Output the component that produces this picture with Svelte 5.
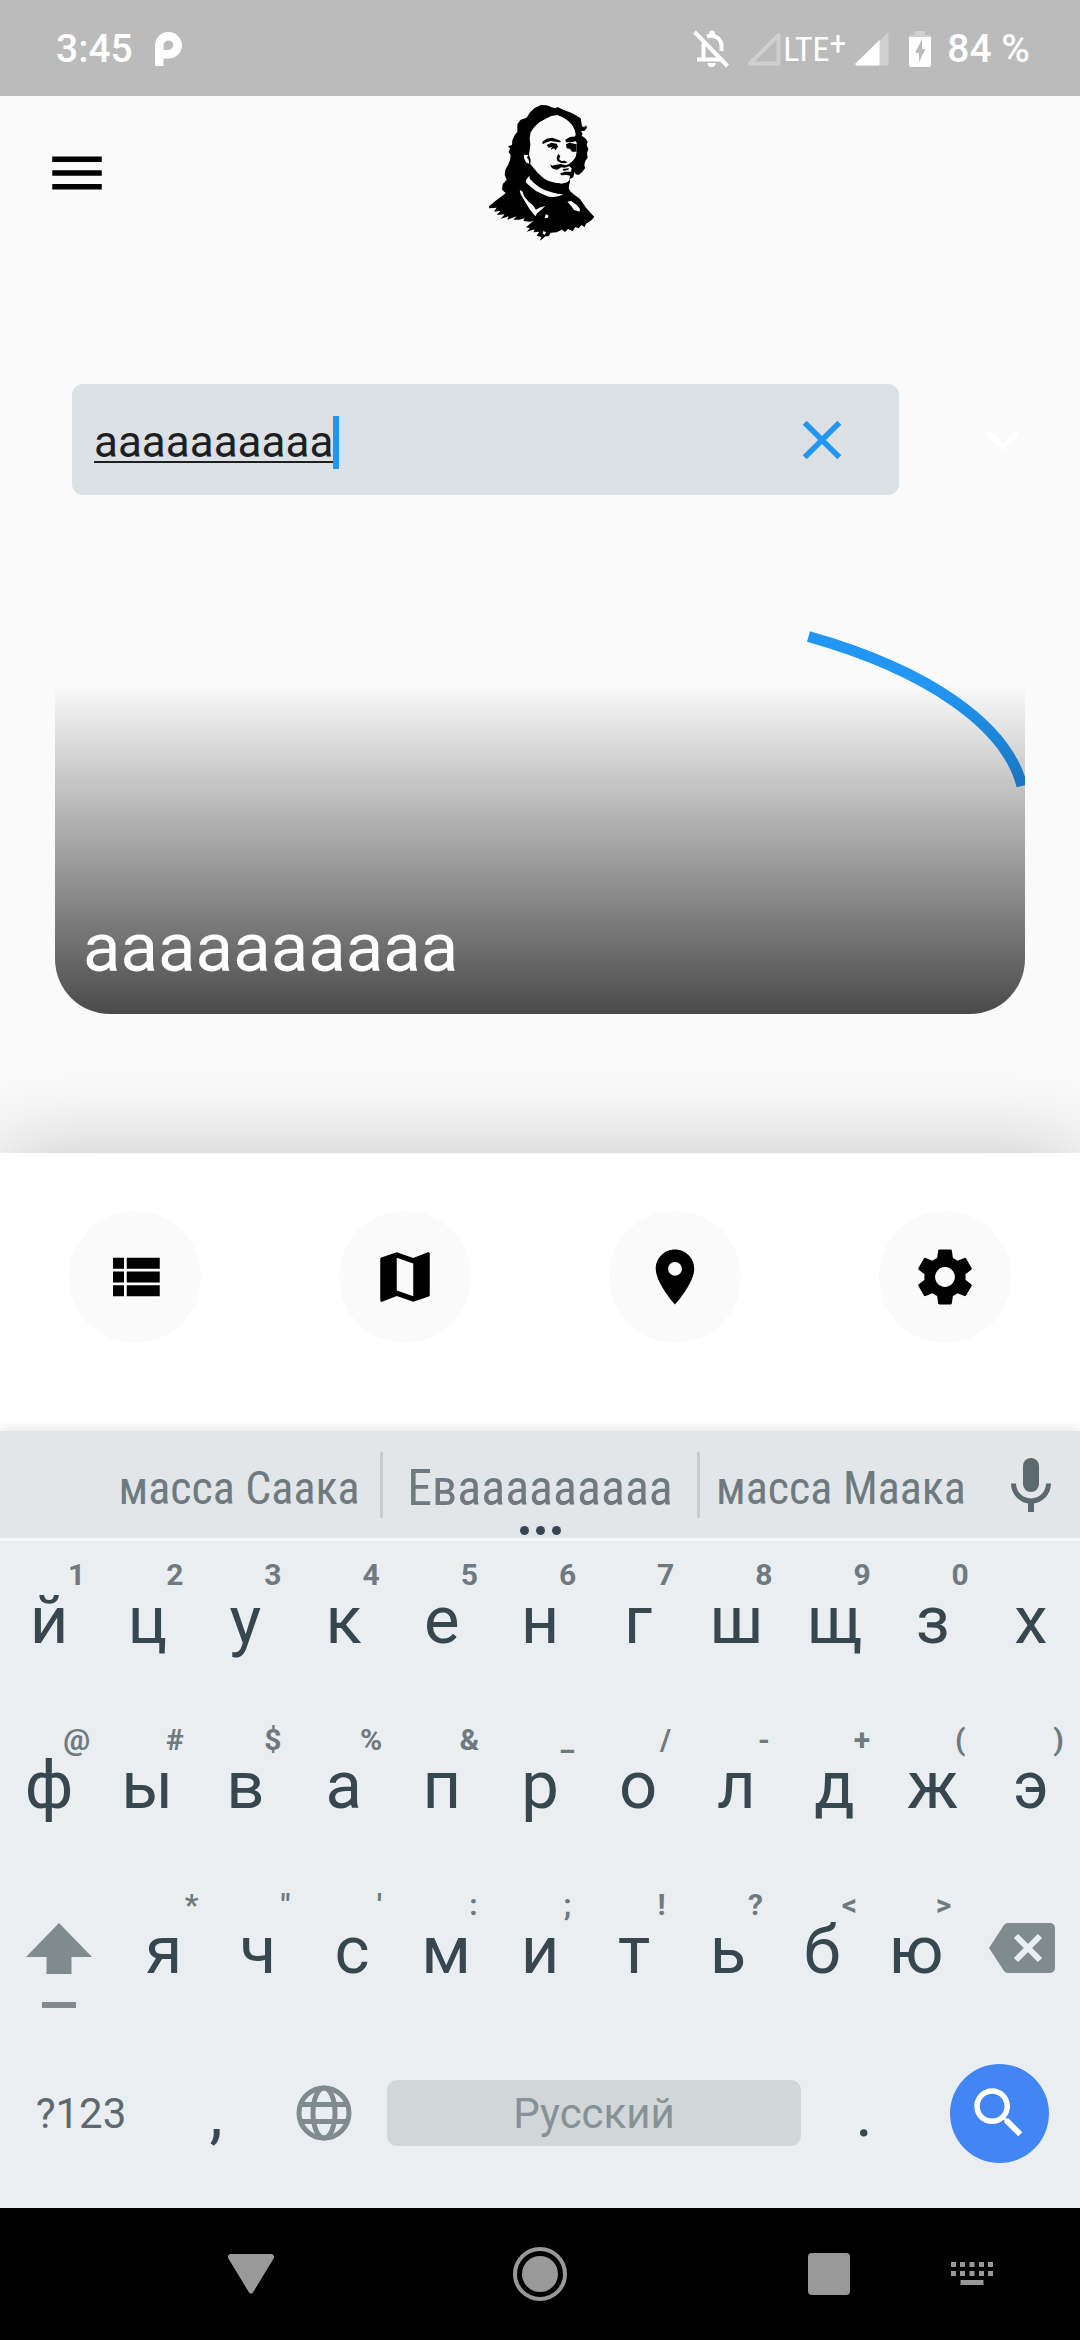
<script lang="ts">
  let query = $state('аааааааааа');

  const tabs = [
    { label: 'Список', d: 'M4 14h4v-4H4v4zm0 5h4v-4H4v4zM4 9h4V5H4v4zm5 5h12v-4H9v4zm0 5h12v-4H9v4zM9 5v4h12V5H9z' },
    { label: 'Карта', d: 'M20.5 3l-.16.03L15 5.1 9 3 3.36 4.9c-.21.07-.36.25-.36.48V20.5c0 .28.22.5.5.5l.16-.03L9 18.9l6 2.1 5.64-1.9c.21-.07.36-.25.36-.48V3.5c0-.28-.22-.5-.5-.5zM15 19l-6-2.11V5l6 2.11V19z' },
    { label: 'Место', d: 'M12 2C8.13 2 5 5.13 5 9c0 5.25 7 13 7 13s7-7.75 7-13c0-3.87-3.13-7-7-7zm0 9.5c-1.38 0-2.5-1.12-2.5-2.5s1.12-2.5 2.5-2.5 2.5 1.12 2.5 2.5-1.12 2.5-2.5 2.5z' },
    { label: 'Настройки', d: 'M19.43 12.98c.04-.32.07-.64.07-.98s-.03-.66-.07-.98l2.11-1.65c.19-.15.24-.42.12-.64l-2-3.46c-.12-.22-.39-.3-.61-.22l-2.49 1c-.52-.4-1.08-.73-1.69-.98l-.38-2.65C14.46 2.18 14.25 2 14 2h-4c-.25 0-.46.18-.49.42l-.38 2.65c-.61.25-1.17.59-1.69.98l-2.49-1c-.23-.09-.49 0-.61.22l-2 3.46c-.13.22-.07.49.12.64l2.11 1.65c-.04.32-.07.65-.07.98s.03.66.07.98l-2.11 1.65c-.19.15-.24.42-.12.64l2 3.46c.12.22.39.3.61.22l2.49-1c.52.4 1.08.73 1.69.98l.38 2.65c.03.24.24.42.49.42h4c.25 0 .46-.18.49-.42l.38-2.65c.61-.25 1.17-.59 1.69-.98l2.49 1c.23.09.49 0 .61-.22l2-3.46c.12-.22.07-.49-.12-.64l-2.11-1.65zM12 15.6c-1.99 0-3.6-1.61-3.6-3.6s1.61-3.6 3.6-3.6 3.6 1.61 3.6 3.6-1.61 3.6-3.6 3.6z' }
  ];

  const suggestions = ['масса Саака', 'Еваааааааааа'.slice(0, 11), 'масса Маака'];

  const pair = (letters: string, hints: string) =>
    [...letters].map((letter, i) => ({ letter, hint: hints[i] ?? '' }));

  const topRow = pair('йцукенгшщзх', '1234567890');
  const homeRow = pair('фывапролджэ', '@#$%&_/-+()');
  const lowRow = pair('ячсмитьбю', '*"\':;!?<>');
</script>

{#snippet key(k: { letter: string; hint: string })}
  <button class="key">
    <span class="hint">{k.hint}</span>
    <span class="letter">{k.letter}</span>
  </button>
{/snippet}

<div class="screen">
  <div class="status">
    <span class="clock">3:45</span>
    <svg class="parking" viewBox="0 0 27 34" width="27" height="34" aria-hidden="true">
      <path fill="#fff" fill-rule="evenodd" d="M0 13.500A13.500 13.200 0 1 1 13.500 26.500H8.500V34H0ZM13.500 8.500a5 5 0 0 0-5 5v4.500h5a4.700 4.700 0 0 0 0-9.500Z" />
    </svg>
    <div class="status-right">
      <svg class="bell" viewBox="0 0 36 38" width="36" height="38" fill="none" stroke="#fff" stroke-width="4" aria-hidden="true">
        <path d="M10.500 13.500V28.500M4 29.500H28M14 6.500C22 4 28.500 9 28.500 16V21" />
        <path d="M1.500 2 34.500 36" />
        <path fill="#fff" stroke="none" d="M16 6V3.500a3 3 0 0 1 6 0V6ZM14.500 33h8a4 4 0 0 1-8 0Z" />
      </svg>
      <svg viewBox="0 0 34 34" width="34" height="34" aria-hidden="true">
        <path d="M31.500 3V31.500H3Z" fill="none" stroke="#cfcfcf" stroke-width="4" stroke-linejoin="round" />
      </svg>
      <span class="lte">LTE<sup>+</sup></span>
      <svg viewBox="0 0 34 34" width="34" height="34" aria-hidden="true">
        <path d="M33 1V33H1Z" fill="#d0d0d0" stroke="#d0d0d0" stroke-width="1" stroke-linejoin="round" />
        <path d="M24.500 8V33.500H1.500L0 32Z" fill="#fff" />
      </svg>
      <svg class="battery" viewBox="0 0 22 36" width="22" height="36" aria-hidden="true">
        <path fill="#d0d0d0" d="M6 0h10v4h4a2 2 0 0 1 2 2H0a2 2 0 0 1 2-2h4Z" />
        <path fill="#fff" fill-rule="evenodd" d="M0 6h22v28a2 2 0 0 1-2 2H2a2 2 0 0 1-2-2ZM13 8 6 22h4v9l6.500-13H13Z" />
      </svg>
      <span>84 %</span>
    </div>
  </div>

  <header class="appbar">
    <button class="menu" aria-label="Меню">
      <svg class="icon" viewBox="0 0 24 24"><path d="M3 18h18v-2H3v2zm0-5h18v-2H3v2zm0-7v2h18V6H3z" /></svg>
    </button>
    <svg class="portrait" viewBox="15 21 330 426" width="110" height="142" role="img" aria-label="Портрет">
      <path d="M183 30 200 31 215 37 226 40 232 36 250 44 275 54 290 62 302 70 304 82 306 94 312 97 318 91 321 98 314 107 303 109 308 116 305 122 316 130 323 140 320 150 325 162 321 175 323 188 316 198 313 208 315 220 306 232 296 240 287 238 284 230 280 246 270 252 268 264 266 280 272 290 284 300 300 312 318 338 343 366 334 376 318 386 314 396 304 390 296 400 286 396 278 409 264 402 255 411 246 404 230 412 212 413 206 424 196 424 188 431 180 437 184 426 170 422 178 410 160 412 164 403 140 410 150 399 138 397 160 378 150 380 130 378 134 370 118 374 100 374 110 364 82 374 86 364 62 372 74 358 50 360 62 347 42 350 50 338 27 340 28 333 46 318 70 300 77 294 66 284 68 268 80 254 74 240 76 224 84 210 90 196 92 180 86 172 90 160 84 154 96 150 97 136 103 122 112 110 112 88 122 74 140 68 150 52 165 38Z" />
      <g fill="#fafafa">
        <path d="M232 60 248 67 264 77 276 89 284 104 287 118 284 132 290 144 291 165 287 186 284 200 276 208 275 222 270 240 268 256 262 263 246 268 232 264 214 264 198 256 184 244 170 230 158 216 151 208 152 194 147 180 149 165 151 148 149 130 152 112 163 96 178 82 200 70 214 63Z" />
        <path d="M131 179 145 180 141 188 146 194 148 206 139 203 133 192Z" />
        <path d="M148 242 150 252 162 264 176 275 192 284 210 290 232 296 250 298 238 303 222 306 206 305 188 298 168 288 150 274 137 262 139 254Z" />
        <path d="M119 284 128 290 132 304 146 320 158 330 168 344 178 338 196 333 184 344 172 354 166 364 150 344 134 318 122 298Z" />
        <path d="M262 320 274 318 290 330 300 342 299 350 282 345 274 334Z" />
        <path d="M198 357 206 362 202 370 194 368ZM190 408 198 412 194 420 188 415Z" />
      </g>
      <path d="M187 140 200 131 216 128 230 133 243 138 240 142 226 140 212 138 200 142 188 148ZM200 150 214 143 230 146 234 155 226 166 222 160 212 164 216 156 206 158ZM256 134 270 126 290 124 290 138 272 142 258 142ZM258 148 268 143 290 148 290 170 276 170 270 162 260 160ZM235 176 241 184 237 192 244 198 254 197 262 202 256 205 244 204 232 198 230 188ZM211 206 216 212 228 209 242 207 258 211 268 206 278 198 289 184 288 206 278 222 268 214 254 218 244 217 232 224 220 222 213 216ZM248 222 268 220 264 225 250 227ZM240 236 254 230 276 230 272 242 258 240 244 241Z" />
      <path d="M152 208 162 222 174 236 188 250 206 258 226 263 244 266 262 262 271 254 268 266 264 284 256 274 242 272 228 276 214 274 200 268 182 256 166 238Z" />
      <path d="M162 258 180 272 198 283 216 290 240 293" fill="none" stroke="#000" stroke-width="2" stroke-dasharray="3 4" />
    </svg>
  </header>

  <main>
    <div class="search-row">
      <div class="field">
        <label class="entry">
          <input type="text" aria-label="Поиск" spellcheck="false" bind:value={query} />
          <span class="caret"></span>
        </label>
        <button class="clear" aria-label="Очистить" onclick={() => (query = '')}>
          <svg class="icon" viewBox="0 0 24 24"><path d="M19 6.410L17.590 5 12 10.590 6.410 5 5 6.410 10.590 12 5 17.590 6.410 19 12 13.410 17.590 19 19 17.590 13.410 12z" /></svg>
        </button>
      </div>
      <button class="expand" aria-label="Развернуть">
        <svg class="icon" viewBox="0 0 24 24"><path d="M7.410 8.590L12 13.170l4.590-4.580L18 10l-6 6-6-6z" /></svg>
      </button>
    </div>

    <article class="card">
      <svg class="spinner" viewBox="0 0 970 412" preserveAspectRatio="none" aria-hidden="true">
        <path d="M753.500 34.500A485 206 0 0 1 967 184" fill="none" stroke="#2196f3" stroke-width="11" />
      </svg>
      <h2>{query}</h2>
    </article>
  </main>

  <nav class="tabs">
    {#each tabs as tab}
      <button aria-label={tab.label}>
        <svg class="icon" viewBox="0 0 24 24"><path d={tab.d} /></svg>
      </button>
    {/each}
  </nav>

  <section class="keyboard" aria-label="Клавиатура">
    <div class="strip">
      <div class="words">
        {#each suggestions as word, i}
          <button>{word}{#if i === 1}<span class="more"><i></i><i></i><i></i></span>{/if}</button>
        {/each}
      </div>
      <button class="mic" aria-label="Голосовой ввод">
        <svg viewBox="0 0 40 54" width="40" height="54">
          <rect x="12" width="16" height="34" rx="8" fill="#5c696f" />
          <path d="M2.500 25.500a17.500 17.500 0 0 0 35 0M20 43V54" fill="none" stroke="#5c696f" stroke-width="5" />
          <path d="M17 42h6v12h-6z" fill="#5c696f" />
        </svg>
      </button>
    </div>

    <div class="keys">
      <div class="row">
        {#each topRow as k}{@render key(k)}{/each}
      </div>
      <div class="row">
        {#each homeRow as k}{@render key(k)}{/each}
      </div>
      <div class="row low">
        <button class="side" aria-label="Shift">
          <svg viewBox="0 0 66 86" width="66" height="86" fill="#808b8f">
            <path d="M33 0 66 34H45.500V51H20.500V34H0ZM16 79h34v6H16Z" />
          </svg>
        </button>
        {#each lowRow as k}{@render key(k)}{/each}
        <button class="side" aria-label="Удалить">
          <svg viewBox="0 0 66 50" width="66" height="50">
            <path d="M19 0H61a5 5 0 0 1 5 5V45a5 5 0 0 1-5 5H19a5 5 0 0 1-4-2L0 25 15 2a5 5 0 0 1 4-2Z" fill="#808b8f" />
            <path d="M27 13 51 37M51 13 27 37" stroke="#eaeef1" stroke-width="6" />
          </svg>
        </button>
      </div>
      <div class="row last">
        <button class="mode">?123</button>
        <button class="punct">,</button>
        <button aria-label="Язык">
          <svg viewBox="0 0 56 56" width="56" height="56" fill="none" stroke="#808b8f" stroke-width="5">
            <circle cx="28" cy="28" r="25" />
            <ellipse cx="28" cy="28" rx="11" ry="25" />
            <path d="M5 19.500H51M5 36.500H51" />
          </svg>
        </button>
        <button class="space">Русский</button>
        <button class="punct">.</button>
        <button class="enter" aria-label="Найти">
          <span>
            <svg class="icon" viewBox="0 0 24 24"><path d="M15.500 14h-.79l-.28-.27C15.410 12.590 16 11.110 16 9.500 16 5.910 13.090 3 9.500 3S3 5.910 3 9.500 5.910 16 9.500 16c1.610 0 3.090-.59 4.230-1.570l.27.28v.79l5 4.990L20.490 19l-4.990-5zm-6 0C7.010 14 5 11.990 5 9.500S7.010 5 9.500 5 14 7.010 14 9.500 11.990 14 9.500 14z" /></svg>
          </span>
        </button>
      </div>
    </div>
  </section>

  <nav class="system">
    <button aria-label="Назад">
      <svg viewBox="0 0 46 40" width="46" height="40"><path d="M3 0H43a3 3 0 0 1 2.600 4.500L25 38.500a2.300 2.300 0 0 1-4 0L.4 4.500A3 3 0 0 1 3 0Z" /></svg>
    </button>
    <button aria-label="Домой">
      <svg viewBox="0 0 54 54" width="54" height="54">
        <circle cx="27" cy="27" r="18" />
        <circle cx="27" cy="27" r="25" fill="none" stroke="#999" stroke-width="4" />
      </svg>
    </button>
    <div class="system-end">
      <button class="recents" aria-label="Недавние">
        <svg viewBox="0 0 42 42" width="42" height="42"><rect width="42" height="42" rx="4" /></svg>
      </button>
      <button class="ime" aria-label="Выбор клавиатуры">
        <svg viewBox="0 0 42 24" width="42" height="24">
          <path d="M0 0h5v5H0zM9 0h5v5H9zM18.500 0h5v5h-5zM28 0h5v5h-5zM37 0h5v5h-5zM0 9h5v5H0zM9 9h5v5H9zM18.500 9h5v5h-5zM28 9h5v5h-5zM37 9h5v5h-5zM9.500 18h23v5h-23z" />
        </svg>
      </button>
    </div>
  </nav>
</div>

<style>
  :global(body) {
    margin: 0;
    background: #fafafa;
  }
  .screen {
    display: flex;
    flex-direction: column;
    min-height: 100vh;
    font-family: Roboto, 'Liberation Sans', sans-serif;
    background: #fafafa;
    overflow: hidden;
  }
  button {
    margin: 0;
    padding: 0;
    border: 0;
    background: none;
    color: inherit;
    font: inherit;
    display: flex;
    align-items: center;
    justify-content: center;
  }
  svg {
    display: block;
    flex: none;
  }
  .icon {
    width: 66px;
    height: 66px;
    fill: currentColor;
  }

  .status {
    display: flex;
    align-items: center;
    height: 96px;
    padding: 2px 50px 0 56px;
    box-sizing: border-box;
    background: #bbb;
    color: #fff;
    font-size: 39px;
    font-weight: 500;
    line-height: 46px;
  }
  .parking {
    margin-left: 22px;
  }
  .status-right {
    display: flex;
    align-items: center;
    margin-left: auto;
  }
  .bell {
    margin-right: 18px;
  }
  .lte {
    display: flex;
    align-items: center;
    width: 74px;
    padding-left: 2px;
    box-sizing: border-box;
    font-family: 'Roboto Condensed', 'Liberation Sans Narrow', 'Open Sans', sans-serif;
    font-size: 34px;
    font-weight: 400;
  }
  .lte sup {
    font-size: 34px;
    line-height: 28px;
    padding-bottom: 12px;
  }
  .battery {
    margin: 0 16px 0 20px;
  }

  .appbar {
    display: grid;
    grid-template-columns: 1fr auto 1fr;
    align-items: center;
    height: 154px;
  }
  .menu {
    width: 154px;
    height: 154px;
  }

  main {
    flex: 1;
    display: flex;
    flex-direction: column;
    padding: 134px 0 139px;
  }
  .search-row {
    display: flex;
    align-items: center;
    padding: 0 44px 0 72px;
  }
  .field {
    flex: 1;
    display: flex;
    align-items: center;
    height: 111px;
    padding: 0 44px 0 22px;
    box-sizing: border-box;
    border-radius: 11px;
    background: #dce1e5;
  }
  .entry {
    display: flex;
    align-items: center;
    min-width: 0;
    padding-top: 5px;
  }
  input {
    field-sizing: content;
    min-width: 0;
    height: 60px;
    padding: 0;
    border: 0;
    outline: 0;
    background: none;
    color: #1f1f1f;
    font-family: inherit;
    font-size: 44px;
    text-decoration: underline;
    text-decoration-thickness: 2px;
    text-underline-offset: 4px;
  }
  .caret {
    flex: none;
    width: 6px;
    height: 53px;
    background: #2196f3;
  }
  .clear {
    margin-left: auto;
    color: #2196f3;
  }
  .expand {
    margin-left: 71px;
    color: #fff;
  }

  .card {
    position: relative;
    display: flex;
    align-items: flex-end;
    height: 412px;
    margin: 107px 55px 0;
    padding: 0 28px 25px;
    box-sizing: border-box;
    border-radius: 55px;
    overflow: hidden;
  }
  .card::after {
    content: '';
    position: absolute;
    inset: 0;
    background: linear-gradient(rgba(0, 0, 0, 0) 20%, rgba(0, 0, 0, 0.7));
  }
  .spinner {
    position: absolute;
    inset: 0;
    width: 100%;
    height: 100%;
  }
  h2 {
    position: relative;
    z-index: 1;
    margin: 0;
    color: #fff;
    font-size: 69px;
    font-weight: 400;
    line-height: 82px;
  }

  .tabs {
    display: grid;
    grid-template-columns: repeat(4, 1fr);
    justify-items: center;
    padding: 58px 0 88px;
    background: #fff;
    box-shadow: 0 0 82px rgba(0, 0, 0, 0.22);
  }
  .tabs button {
    width: 132px;
    height: 132px;
    border-radius: 50%;
    background: #fafafa;
    color: #000;
  }

  .keyboard {
    position: relative;
    background: #eaeef1;
    box-shadow: 0 0 12px rgba(0, 0, 0, 0.15);
  }
  .strip {
    display: flex;
    height: 107px;
    padding-left: 98px;
    background: #e2e6e9;
    border-bottom: 3px solid #f4f6f8;
  }
  .words {
    flex: 1;
    display: grid;
    grid-template-columns: 1fr 320px 1fr;
    padding: 21px 0 20px;
  }
  .words button {
    position: relative;
    padding-top: 5px;
    color: #6e7a7f;
    font-family: 'Roboto Condensed', Roboto, sans-serif;
    font-size: 46px;
    line-height: 58px;
    white-space: nowrap;
  }
  .words button:nth-child(2) {
    border: solid #c8cdd0;
    border-width: 0 3px;
    font-size: 50px;
  }
  .more {
    position: absolute;
    top: 74px;
    left: 0;
    right: 0;
    display: flex;
    justify-content: center;
    gap: 7px;
  }
  .more i {
    width: 9px;
    height: 9px;
    border-radius: 50%;
    background: #37474f;
  }
  .mic {
    width: 98px;
  }

  .keys {
    padding: 2px 0 20px;
    color: #37474f;
  }
  .row {
    display: grid;
    grid-template-columns: repeat(11, 1fr);
    height: 165px;
  }
  .row.low {
    grid-template-columns: 117px repeat(9, 1fr) 117px;
  }
  .row.last {
    grid-template-columns: 3fr 2fr 2fr 8fr 2fr 3fr;
    align-items: center;
    height: 150px;
  }
  .key {
    flex-direction: column;
    align-items: stretch;
    justify-content: flex-start;
    min-width: 0;
    padding-top: 14px;
  }
  .hint {
    height: 36px;
    padding-left: 55px;
    color: #6e7a7f;
    font-size: 30px;
    font-weight: 700;
    line-height: 36px;
  }
  .letter {
    font-size: 67px;
    line-height: 54px;
  }
  .side {
    align-items: flex-start;
    padding-top: 50px;
  }
  .mode {
    color: #5c696f;
    font-size: 42px;
  }
  .punct {
    font-size: 67px;
    line-height: 78px;
  }
  .space {
    height: 66px;
    margin: 0 9px;
    border-radius: 10px;
    background: #d1d6d9;
    color: #879296;
    font-size: 42px;
  }
  .enter span {
    display: flex;
    align-items: center;
    justify-content: center;
    width: 99px;
    height: 99px;
    border-radius: 50%;
    background: #4285f4;
    color: #fff;
  }

  .system {
    position: relative;
    display: grid;
    grid-template-columns: 1fr 76px 1fr;
    height: 132px;
    background: #000;
    fill: #999;
  }
  .system-end {
    display: grid;
    grid-template-columns: 1fr 100px 1fr;
  }
  .recents {
    grid-column: 2;
  }
  .ime {
    padding-right: 16px;
  }
</style>
